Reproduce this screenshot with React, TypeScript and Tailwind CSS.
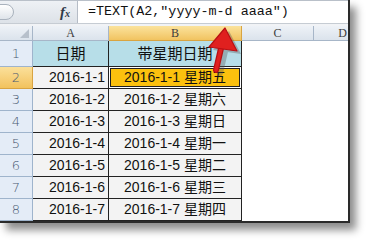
import React from "react";

const rows = [
    { a: "2016-1-1", b: "2016-1-1 星期五" },
    { a: "2016-1-2", b: "2016-1-2 星期六" },
    { a: "2016-1-3", b: "2016-1-3 星期日" },
    { a: "2016-1-4", b: "2016-1-4 星期一" },
    { a: "2016-1-5", b: "2016-1-5 星期二" },
    { a: "2016-1-6", b: "2016-1-6 星期三" },
    { a: "2016-1-7", b: "2016-1-7 星期四" },
];

const cellFont = "font-['Liberation_Sans','Noto_Sans_CJK_SC',sans-serif] text-[14px] text-[#111]";
const headFont = "font-['Liberation_Serif','Noto_Sans_CJK_SC',serif] text-[12px] text-[#3d3d3d]";
const rowNumFont = "font-['DejaVu_Sans','Liberation_Sans',sans-serif] font-light text-[13px] text-[#4a5a72]";

const Arrow = () => (
    <svg className="absolute left-0 top-0 pointer-events-none" width="371" height="244" viewBox="0 0 371 244">
        {/* shadow */}
        <g opacity="0.35" transform="translate(4,3)">
            <line x1="222" y1="44" x2="216" y2="70" stroke="#555" strokeWidth="6" strokeLinecap="round" />
            <polygon points="225,28 209,47 237,51" fill="#555" />
        </g>
        <line x1="222" y1="44" x2="216" y2="70" stroke="#b80f14" strokeWidth="6" strokeLinecap="round" />
        <line x1="222" y1="44" x2="216" y2="70" stroke="#e0201f" strokeWidth="3.5" strokeLinecap="round" />
        <polygon points="225,28 209,47 237,51" fill="#e0201f" stroke="#b80f14" strokeWidth="1.2" strokeLinejoin="round" />
    </svg>
);

const App = () => {
    return (
        <div className="relative w-[371px] h-[244px] bg-white overflow-hidden">
            <div className="w-[350px] h-[223px] bg-white border-r-2 border-b-2 border-[#2a2a2a] shadow-[6px_7px_8px_rgba(0,0,0,0.45)] overflow-hidden flex flex-col">
                {/* formula bar */}
                <div className="h-[25px] flex border-t border-[#b9c0c9] border-b border-b-[#c6ccd3] bg-[#e3e7ec]">
                    <div className="w-[78px] flex items-center border-r border-[#b5bcc6] bg-gradient-to-b from-[#eef1f5] to-[#dde2e8]">
                        <div className="-ml-[8px] w-[22px] h-[16px] rounded-full border border-[#a9b2bd] bg-gradient-to-b from-white to-[#dfe4ea]"></div>
                        <span className="ml-[46px] font-['Liberation_Serif',serif] italic font-bold text-[15px] text-[#2f3a48] leading-none">
                            f<span className="text-[10px]">x</span>
                        </span>
                    </div>
                    <div className="flex-1 bg-white flex items-center pl-[10px] font-['Liberation_Mono','Noto_Sans_CJK_SC',monospace] text-[13.4px] text-[#111] whitespace-nowrap">
                        =TEXT(A2,″yyyy-m-d aaaa″)
                    </div>
                </div>
                <div className="h-[2px] bg-[#f1f3f6]"></div>

                {/* sheet */}
                <div className="grid grid-cols-[33px_76px_133px_72px_1fr] grid-rows-[15px_26px_repeat(7,22px)]">
                    {/* column headers */}
                    <div className="relative bg-gradient-to-b from-[#eef2f7] to-[#dbe3ec] border-r border-b border-[#a7b6c8]">
                        <div className="absolute right-[3px] bottom-[2px] w-0 h-0 border-l-[9px] border-l-transparent border-b-[9px] border-b-[#b7c0cb]"></div>
                    </div>
                    <div className={`flex items-center justify-center bg-gradient-to-b from-[#eef2f7] to-[#dbe3ec] border-r border-b border-[#a7b6c8] ${headFont}`}>A</div>
                    <div className={`flex items-center justify-center bg-gradient-to-b from-[#fbe39c] to-[#f1c35f] border-r border-b border-[#d9a441] ${headFont}`}>B</div>
                    <div className={`flex items-center justify-center bg-gradient-to-b from-[#eef2f7] to-[#dbe3ec] border-r border-b border-[#a7b6c8] ${headFont}`}>C</div>
                    <div className={`flex items-center justify-end pr-[1px] bg-gradient-to-b from-[#eef2f7] to-[#dbe3ec] border-b border-[#a7b6c8] ${headFont}`}>
                        <span>D</span>
                    </div>

                    {/* row 1 */}
                    <div className={`flex items-center justify-center bg-[#e4ecf7] border-r border-b border-[#9fb4cc] ${rowNumFont}`}>1</div>
                    <div className="flex items-center justify-center bg-[#b7dee8] border-r border-b border-[#222] font-['Noto_Sans_CJK_SC',sans-serif] text-[15px] text-[#111]">日期</div>
                    <div className="flex items-center justify-center bg-[#b7dee8] border-r border-b border-[#222] font-['Noto_Sans_CJK_SC',sans-serif] text-[15px] text-[#111]">带星期日期</div>
                    <div className="bg-white"></div>
                    <div className="bg-white"></div>

                    {rows.map((row, i) => (
                        <React.Fragment key={row.a}>
                            <div className={`flex items-center justify-center border-r border-b ${i === 0 ? "bg-gradient-to-b from-[#fbe09a] to-[#f2c25c] border-[#d9a441] text-[#3f3a2a]" : "bg-[#e4ecf7] border-[#9fb4cc]"} ${rowNumFont}`}>{String(i + 2)}</div>
                            <div className={`flex items-center justify-end pr-[3px] bg-[#f3f3f3] border-r border-b border-[#222] ${cellFont}`}>{row.a}</div>
                            {i === 0 ? (
                                <div className="p-px bg-white border-r border-b border-[#222]">
                                    <div className={`h-full flex items-center justify-center bg-[#fcc10e] border border-[#222] ${cellFont}`}>{row.b}</div>
                                </div>
                            ) : (
                                <div className={`flex items-center justify-center bg-[#f3f3f3] border-r border-b border-[#222] ${cellFont}`}>{row.b}</div>
                            )}
                            <div className="bg-white"></div>
                            <div className="bg-white"></div>
                        </React.Fragment>
                    ))}
                </div>
            </div>
            <Arrow />
        </div>
    );
};

export default App;
